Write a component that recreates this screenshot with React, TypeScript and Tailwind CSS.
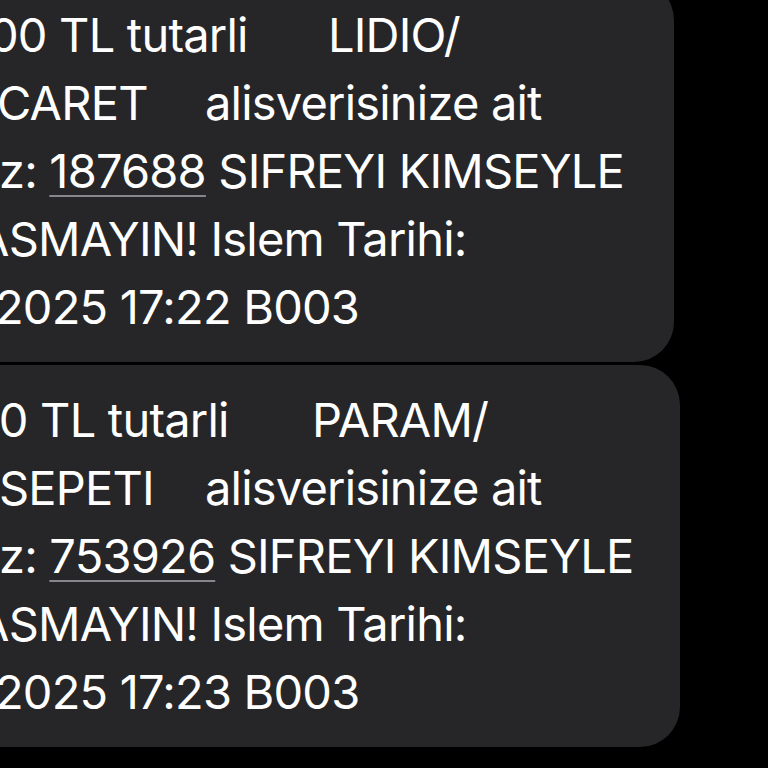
const font = { fontFamily: 'Inter, "Liberation Sans", sans-serif' }

type Seg = { text: string; width?: string; code?: boolean }
type Line = { offset: string; segs: Seg[] }

const first: Line[] = [
  { offset: '-ml-[11px]', segs: [{ text: '00 TL tutarli', width: 'w-[339px]' }, { text: 'LIDIO/' }] },
  { offset: '-ml-[3px]', segs: [{ text: 'CARET', width: 'w-[208px]' }, { text: 'alisverisinize ait' }] },
  { offset: '-ml-[1px]', segs: [{ text: 'z: ' }, { text: '187688', code: true }, { text: ' SIFREYI KIMSEYLE' }] },
  { offset: '-ml-[23px]', segs: [{ text: 'ASMAYIN! Islem Tarihi:' }] },
  { offset: '-ml-[5px]', segs: [{ text: '2025 17:22 B003' }] },
]

const second: Line[] = [
  { offset: '-ml-[30px]', segs: [{ text: '00 TL tutarli', width: 'w-[342px]' }, { text: 'PARAM/' }] },
  { offset: '-ml-[1px]', segs: [{ text: 'SEPETI', width: 'w-[206px]' }, { text: 'alisverisinize ait' }] },
  { offset: '-ml-[1px]', segs: [{ text: 'z: ' }, { text: '753926', code: true }, { text: ' SIFREYI KIMSEYLE' }] },
  { offset: '-ml-[23px]', segs: [{ text: 'ASMAYIN! Islem Tarihi:' }] },
  { offset: '-ml-[5px]', segs: [{ text: '2025 17:23 B003' }] },
]

function Bubble({ lines, width }: { lines: Line[]; width: string }) {
  return (
    <div className={`${width} bg-[#262628] rounded-r-[40px] pt-[21px] pb-[21px]`}>
      {lines.map((line, i) => (
        <div key={i} className={`flex h-[68px] leading-[68px] whitespace-pre ${line.offset}`}>
          {line.segs.map((seg, j) => (
            <span
              key={j}
              className={`${seg.width ?? ''} shrink-0 ${
                seg.code ? 'underline decoration-[#86868b] decoration-2 underline-offset-[7px]' : ''
              }`}
            >
              {seg.text}
            </span>
          ))}
        </div>
      ))}
    </div>
  )
}

export default function App() {
  return (
    <div
      className="w-[768px] h-[768px] bg-black overflow-hidden text-white text-[47px] tracking-[-0.8px]"
      style={font}
    >
      <div className="flex flex-col gap-[3px] -mt-[20px]">
        <Bubble lines={first} width="w-[674px]" />
        <Bubble lines={second} width="w-[680px]" />
      </div>
    </div>
  )
}
